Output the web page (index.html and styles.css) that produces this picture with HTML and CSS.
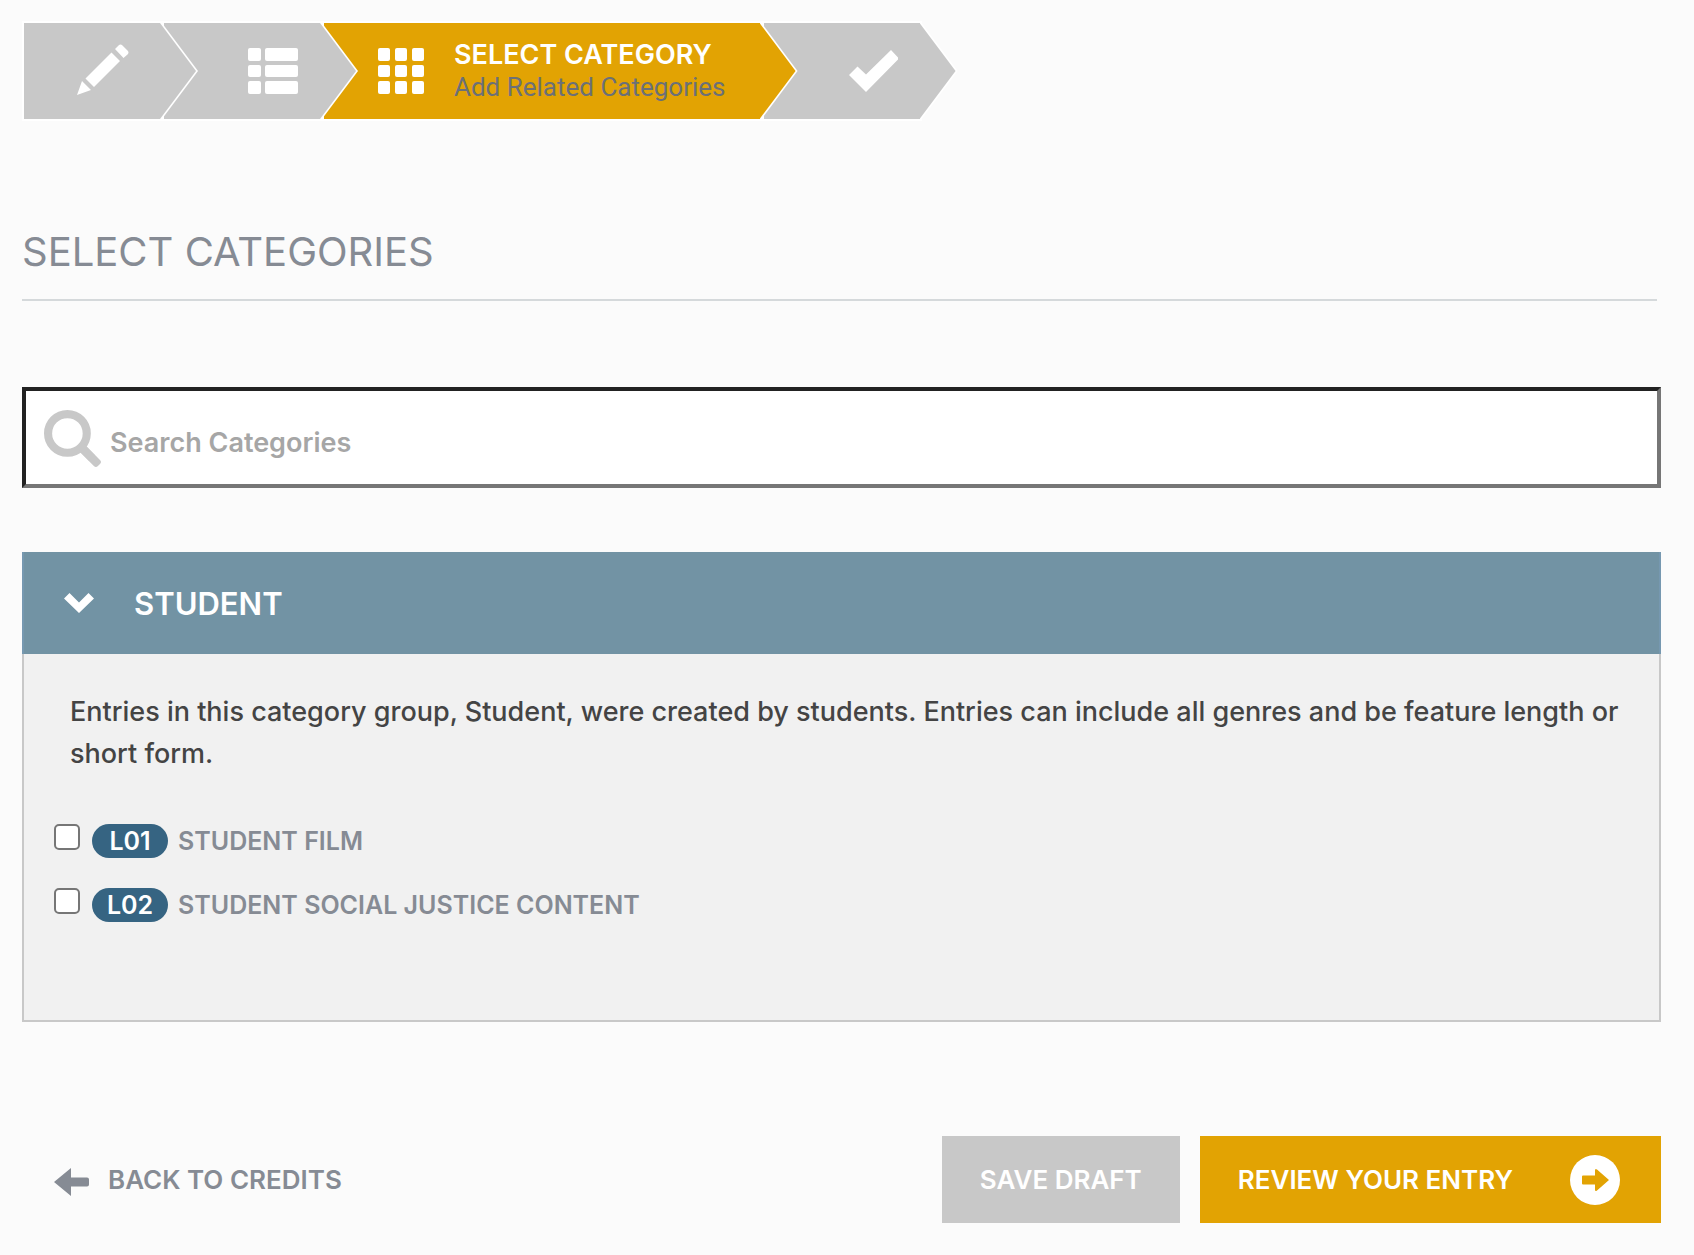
FILE: index.html
```html
<!DOCTYPE html>
<html lang="en">
<head>
  <meta charset="UTF-8">
  <meta name="viewport" content="width=device-width, initial-scale=1.0">
  <title>Select Categories</title>
  <link rel="stylesheet" href="styles.css">
</head>
<body>

  <ol class="steps">
    <li class="step step-first">
      <svg class="step-icon" viewBox="0 0 52 54" aria-hidden="true">
        <path d="M0 51l5-14 9 9zM8.500 34.500L34.500 8.500l8.500 8.500L17 43zM38 5l3.500-3.500q2-2 4 0l5 5q2 2 0 4L46.500 14z"/>
      </svg>
    </li>
    <li class="step">
      <svg class="step-icon" viewBox="0 0 50 46" aria-hidden="true">
        <rect x="0" y="0" width="13" height="13" rx="2"/><rect x="17" y="0" width="33" height="13" rx="2"/>
        <rect x="0" y="17" width="13" height="12" rx="2"/><rect x="17" y="17" width="33" height="12" rx="2"/>
        <rect x="0" y="33" width="13" height="13" rx="2"/><rect x="17" y="33" width="33" height="13" rx="2"/>
      </svg>
    </li>
    <li class="step step-active" aria-current="step">
      <svg class="step-icon" viewBox="0 0 46 46" aria-hidden="true">
        <rect x="0" y="0" width="12" height="13" rx="2"/><rect x="17" y="0" width="12" height="13" rx="2"/><rect x="34" y="0" width="12" height="13" rx="2"/>
        <rect x="0" y="17" width="12" height="12" rx="2"/><rect x="17" y="17" width="12" height="12" rx="2"/><rect x="34" y="17" width="12" height="12" rx="2"/>
        <rect x="0" y="33" width="12" height="13" rx="2"/><rect x="17" y="33" width="12" height="13" rx="2"/><rect x="34" y="33" width="12" height="13" rx="2"/>
      </svg>
      <div class="step-text">
        <strong class="step-title">SELECT CATEGORY</strong>
        <span class="step-desc">Add Related Categories</span>
      </div>
    </li>
    <li class="step">
      <svg class="step-icon" viewBox="0 0 50 46" aria-hidden="true">
        <path d="M1 27l8.500-8.500 8.500 8L43 2l8 8.500L18 44z"/>
      </svg>
    </li>
  </ol>

  <h1 class="page-title">SELECT CATEGORIES</h1>

  <form class="category-form">
    <div class="search">
      <svg class="search-icon" viewBox="0 0 56 56" aria-hidden="true">
        <circle cx="23" cy="23" r="19"/>
        <path d="M36 36l11 11"/>
        <path class="search-handle" d="M40 34l15 15q2 2 0 4l-2 2q-2 2-4 0L34 40z"/>
      </svg>
      <input type="text" class="search-input" placeholder="Search Categories" aria-label="Search Categories">
    </div>

    <section class="group">
      <h2 class="group-header">
        <button type="button" class="group-toggle" aria-expanded="true">
          <svg class="group-arrow" viewBox="0 0 30 20" aria-hidden="true">
            <path d="M0 5.500L5.500 0 15 9.500 24.500 0 30 5.500 15 20z"/>
          </svg>
          STUDENT
        </button>
      </h2>
      <div class="group-body">
        <p class="group-desc">Entries in this category group, Student, were created by students. Entries can include all genres and be feature length or short form.</p>
        <div class="category">
          <input type="checkbox" class="category-check" id="cat-l01">
          <label class="category-label" for="cat-l01"><span class="badge">L01</span>STUDENT FILM</label>
        </div>
        <div class="category">
          <input type="checkbox" class="category-check" id="cat-l02">
          <label class="category-label" for="cat-l02"><span class="badge">L02</span>STUDENT SOCIAL JUSTICE CONTENT</label>
        </div>
      </div>
    </section>

    <div class="actions">
      <a href="#" class="back-link">
        <svg class="back-icon" viewBox="0 0 35 32" aria-hidden="true">
          <path d="M0 18L17 4v9.500h16q2 0 2 2v5q0 2-2 2H17V32z"/>
        </svg>
        BACK TO CREDITS
      </a>
      <button type="button" class="button save-button">SAVE DRAFT</button>
      <button type="submit" class="button review-button">
        REVIEW YOUR ENTRY
        <svg class="review-icon" viewBox="0 0 50 50" aria-hidden="true">
          <circle cx="25" cy="25" r="25"/>
          <path d="M12 21.500q0-1 1-1h12v-5q0-2.500 2-1L39 25 27 35.500q-2 1.500-2-1v-5H13q-1 0-1-1z"/>
        </svg>
      </button>
    </div>
  </form>

</body>
</html>
```
FILE: styles.css
```css
* {
  box-sizing: border-box;
}
body {
  margin: 0;
  padding: 23px 33px 31px 22px;
  background-color: #fbfbfb;
  color: #868b94;
  font-family: Inter, "Liberation Sans", sans-serif;
  font-size: 26px;
}
.steps {
  display: flex;
  gap: 4px;
  margin: 0 0 108px 2px;
  padding: 0;
  list-style: none;
}
.step {
  position: relative;
  display: flex;
  align-items: center;
  height: 96px;
  padding: 0 22px 0 84px;
  background-color: #c8c8c8;
  box-shadow: 0 0 0 2px #fff;
}
.step-first {
  padding-left: 53px;
  padding-right: 31px;
}
/* arrow heads, white one peeks out behind the coloured one */
.step::before,
.step::after {
  content: "";
  position: absolute;
  top: 0;
  left: 100%;
  z-index: 1;
  width: 38px;
  height: 96px;
  margin-left: -2px;
  background-color: #c8c8c8;
  clip-path: polygon(0 0, 2px 0, 100% 50%, 2px 100%, 0 100%);
}
.step::before {
  margin-left: 0;
  background-color: #fff;
}
.step-active {
  gap: 30px;
  padding: 0 34px 0 54px;
}
.step-active,
.step-active::after {
  background-color: #e2a303;
}
.step-icon {
  height: 46px;
  fill: #fff;
}
.step-first .step-icon {
  height: 54px;
}
.step-text {
  display: flex;
  flex-direction: column;
  line-height: 32px;
}
.step-title {
  color: #fff;
  font-size: 27px;
  font-weight: 600;
}
.step-desc {
  color: #6b7078;
  font-family: Roboto, sans-serif;
}
.page-title {
  margin: 0 4px 86px 0;
  padding-bottom: 23px;
  border-bottom: 2px solid #d5d9db;
  font-size: 40px;
  font-weight: 400;
  line-height: 49px;
}
.search {
  position: relative;
  margin-bottom: 64px;
}
.search-icon {
  position: absolute;
  top: 23px;
  left: 22px;
  width: 57px;
  fill: none;
  stroke: #c8c8c8;
  stroke-width: 8;
}
.search-icon .search-handle {
  fill: #c8c8c8;
  stroke: none;
}
.search-input {
  display: block;
  width: 100%;
  height: 101px;
  padding: 10px 20px 0 84px;
  border: 4px solid;
  border-color: #222 #767676 #767676 #222;
  border-radius: 0;
  background-color: #fff;
  color: #444;
  font: 600 27px Inter, "Liberation Sans", sans-serif;
}
.search-input::placeholder {
  color: #a6a6a6;
}
.group {
  margin-bottom: 114px;
}
.group-header {
  margin: 0;
}
.group-toggle {
  display: flex;
  align-items: center;
  gap: 40px;
  width: 100%;
  height: 102px;
  padding: 0 40px;
  border: solid #7698b0;
  border-width: 0 2px;
  background-color: #7293a4;
  color: #fff;
  font: 600 31px Inter, "Liberation Sans", sans-serif;
}
.group-arrow {
  width: 30px;
  fill: #fff;
}
.group-body {
  padding: 37px 30px 98px;
  border: 2px solid #c8c8c8;
  border-top: 0;
  background-color: #f1f1f1;
}
.group-desc {
  margin: 0 0 49px 16px;
  color: #444;
  font-size: 27px;
  font-weight: 500;
  line-height: 42px;
}
.category {
  display: flex;
  gap: 12px;
  margin-bottom: 30px;
}
.category:last-child {
  margin-bottom: 0;
}
.category-check {
  appearance: none;
  width: 26px;
  height: 26px;
  margin: 0;
  border: 2px solid #767676;
  border-radius: 5px;
  background-color: #fff;
}
.category-check:checked {
  background-color: #366482;
}
.category-label {
  display: flex;
  gap: 10px;
  font-size: 25px;
  font-weight: 600;
  line-height: 34px;
}
.badge {
  width: 76px;
  border-radius: 17px;
  background-color: #366482;
  color: #fff;
  text-align: center;
}
.actions {
  display: flex;
  align-items: center;
  gap: 20px;
}
.back-link {
  display: flex;
  align-items: center;
  gap: 19px;
  margin-left: 32px;
  margin-right: auto;
  color: #868b94;
  font-weight: 600;
  text-decoration: none;
}
.back-icon {
  width: 35px;
  fill: #868b94;
}
.button {
  display: flex;
  align-items: center;
  justify-content: space-between;
  height: 87px;
  padding: 0 38px;
  border: 0;
  color: #fff;
  font: 600 26px Inter, "Liberation Sans", sans-serif;
  cursor: pointer;
}
.save-button {
  background-color: #c8c8c8;
}
.review-button {
  gap: 57px;
  padding-right: 41px;
  background-color: #e2a303;
}
.review-icon {
  width: 50px;
  fill: #fff;
}
.review-icon path {
  fill: #e2a303;
}
```
